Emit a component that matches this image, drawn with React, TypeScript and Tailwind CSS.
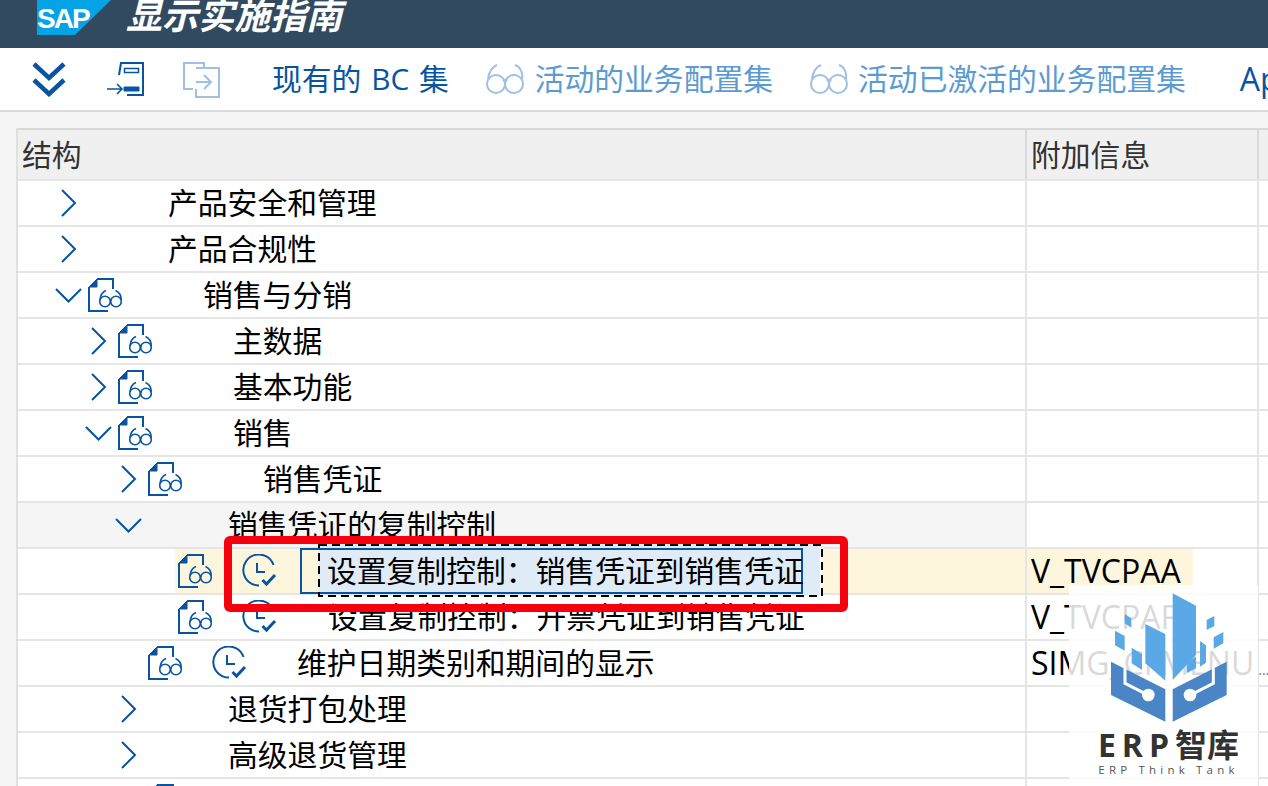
import type { ReactNode } from "react";

type TreeRow = {
  indent: string;
  chevron?: "right" | "down";
  doc?: boolean;
  clock?: boolean;
  gap: string;
  text?: string;
  info?: ReactNode;
  rowClass?: string;
  focused?: boolean;
};

const rows: TreeRow[] = [
  { indent: "pl-[37px]", chevron: "right", gap: "w-[80px]", text: "产品安全和管理" },
  { indent: "pl-[37px]", chevron: "right", gap: "w-[80px]", text: "产品合规性" },
  { indent: "pl-[37px]", chevron: "down", doc: true, gap: "w-[80px]", text: "销售与分销" },
  { indent: "pl-[67px]", chevron: "right", doc: true, gap: "w-[80px]", text: "主数据" },
  { indent: "pl-[67px]", chevron: "right", doc: true, gap: "w-[80px]", text: "基本功能" },
  { indent: "pl-[67px]", chevron: "down", doc: true, gap: "w-[80px]", text: "销售" },
  { indent: "pl-[97px]", chevron: "right", doc: true, gap: "w-[80px]", text: "销售凭证" },
  { indent: "pl-[97px]", chevron: "down", gap: "w-[80px]", text: "销售凭证的复制控制", rowClass: "bg-[#f5f5f5]" },
  { indent: "pl-[127px]", doc: true, clock: true, gap: "w-[24px]", text: "设置复制控制：销售凭证到销售凭证", info: "V_TVCPAA", focused: true },
  { indent: "pl-[127px]", doc: true, clock: true, gap: "w-[52px]", text: "设置复制控制：开票凭证到销售凭证", info: "V_TVCPAF" },
  { indent: "pl-[97px]", doc: true, clock: true, gap: "w-[51px]", text: "维护日期类别和期间的显示", info: "SIMG_CFMENU" },
  { indent: "pl-[97px]", chevron: "right", gap: "w-[80px]", text: "退货打包处理" },
  { indent: "pl-[97px]", chevron: "right", gap: "w-[80px]", text: "高级退货管理" },
  { indent: "pl-[97px]", doc: true, gap: "w-[80px]" },
];

function Chevron({ dir }: { dir: "right" | "down" }) {
  return (
    <svg width="33" height="30" viewBox="0 0 33 30" fill="none" stroke="#0854a0" strokeWidth="2" className="shrink-0">
      {dir === "right" ? <path d="M7 2l13 13L7 28" /> : <path d="M1 9l12.5 12.5L26 9" />}
    </svg>
  );
}

function GlassesDoc() {
  return (
    <svg width="35" height="34" viewBox="0 0 35 34" fill="none" stroke="#0854a0" strokeWidth="2" className="shrink-0">
      <path d="M9 1h16v10M1 9v24h19" />
      <path d="M1 9l8-8v8z" fill="#0854a0" strokeWidth="1" />
      <circle cx="17" cy="23.5" r="5.300" strokeWidth="1.600" />
      <circle cx="28" cy="23.5" r="5.300" strokeWidth="1.600" />
      <path d="M22 22.500c.8-.8 1.200-.8 1 0M12 22c.3-4 2.500-8 6-9.500M33.200 22c0-4-2.200-8-5.700-9.500" strokeWidth="1.600" />
    </svg>
  );
}

function ClockCheck() {
  return (
    <svg width="36" height="34" viewBox="0 0 36 34" fill="none" stroke="#0854a0" strokeWidth="2" className="shrink-0">
      <path d="M31.500 11A15.500 15.500 0 1 0 17 31.500" />
      <path d="M15 9v9h8" />
      <path d="M20.500 26l4 4 8.500-9" strokeWidth="3" />
    </svg>
  );
}

function Spectacles() {
  return (
    <svg width="38" height="30" viewBox="0 0 38 30" fill="none" stroke="#9dc0e3" strokeWidth="2" className="shrink-0">
      <circle cx="10" cy="20" r="9" />
      <circle cx="28" cy="20" r="9" />
      <path d="M17 17c2-2 3-2 4 0M2 15C3 8 6 3 11 1M36 15c1-5-1-12-7-14" />
    </svg>
  );
}

function Tree({ row }: { row: TreeRow }) {
  return (
    <div className={`flex h-[46px] border-b-2 border-[#e5e5e5] ${row.focused ? "relative z-10" : ""}`}>
      <div className={`relative flex w-[1007px] shrink-0 items-center ${row.indent} ${row.rowClass ?? ""}`}>
        {row.focused && <div className="absolute left-[157px] top-0 bottom-0 right-0 bg-[#fdf6dd]" />}
        <div className="relative flex items-center">
          <div className="w-[33px] shrink-0">{row.chevron && <Chevron dir={row.chevron} />}</div>
          {row.doc && (
            <div className={row.clock ? "w-[64px] shrink-0" : "w-[35px] shrink-0"}>
              <GlassesDoc />
            </div>
          )}
          {row.clock && (
            <div className="w-[34px] shrink-0">
              <ClockCheck />
            </div>
          )}
          <div className={`shrink-0 ${row.gap}`} />
          {row.focused ? (
            <div className="relative flex h-[46px] w-[503px] shrink-0 items-center">
              <div className="absolute left-[19px] top-[-3px] h-[51px] w-[503px] border-r-2 border-white bg-[#dfecf8]" />
              <div className="absolute inset-0 border-2 border-[#0854a0]" />
              <svg width="505" height="53" viewBox="0 0 505 53" fill="none" stroke="#000" strokeWidth="2" strokeDasharray="8 5" className="absolute left-[18px] top-[-4px]">
                <rect x="1" y="1" width="503" height="51" />
              </svg>
              <span className="relative ml-[27px] whitespace-nowrap text-[29.8px] text-black">{row.text}</span>
            </div>
          ) : (
            row.text && <span className="whitespace-nowrap text-[29.8px] text-black">{row.text}</span>
          )}
        </div>
      </div>
      <div className="flex w-[232px] shrink-0 items-center border-l-2 border-[#e5e5e5]">
        {row.info && (
          <span className={`flex h-full items-center whitespace-nowrap pl-[4px] pr-[12px] text-[32px] text-black ${row.focused ? "bg-[#fdf6dd] text-[#333]" : ""}`}>
            {row.info}
            {row.info === "SIMG_CFMENU" && <span className="ml-[4px] mt-[12px] text-[14px] text-[#777]">...</span>}
          </span>
        )}
      </div>
      <div className="w-[11px] shrink-0 border-l-2 border-[#e5e5e5]" />
    </div>
  );
}

function Watermark() {
  return (
    <div className="absolute left-[1069px] top-[585px] z-20 flex h-[201px] w-[189px] flex-col items-center bg-white/85">
      <svg width="188" height="146" viewBox="147 135 564 438" className="shrink-0">
        <g fill="#5aa9e6">
          <path d="M455 160l70 37v148l-70 75z" />
          <path d="M373 252l60 30v140l-60-52z" />
          <path d="M311 222l20 13v28l-20-13z" />
          <path d="M282 272l29 16v44l-29-16z" />
          <path d="M332 323l31 19v48l-31-20z" />
          <path d="M557 240l23-12v30l-23 12z" />
          <path d="M578 292l29-16v34l-29 16z" />
          <path d="M537 303l18 13v52l-18 12z" />
          <path d="M497 367l28-17v35l-28 15z" />
        </g>
        <g fill="#4a86c5">
          <path d="M270 365l163 83v97l-163-80z" />
          <path d="M617 365L455 448v97l162-80z" />
        </g>
        <g fill="none" stroke="#fff" strokeWidth="9">
          <path d="M312 385v45l65 33" />
          <path d="M577 385v45l-65 33" />
        </g>
        <circle cx="382" cy="465" r="19" fill="#fff" />
        <circle cx="507" cy="465" r="19" fill="#fff" />
      </svg>
      <div className="mt-[-4px] whitespace-nowrap pl-[10px] text-[32px] font-bold leading-[36px] text-[#333]">
        <span className="tracking-[6px]">ERP</span>智库
      </div>
      <div className="whitespace-nowrap pl-[10px] text-[11.5px] leading-[14px] tracking-[4.200px] text-[#555]">ERP Think Tank</div>
    </div>
  );
}

export default function App() {
  return (
    <div className="relative h-[786px] w-[1268px] overflow-hidden bg-[#f5f5f5] font-['Open_Sans','Noto_Sans_CJK_SC',sans-serif]">
      {/* title bar */}
      <div className="flex h-12 items-start overflow-hidden bg-[#314a60] pl-[37px]">
        <svg width="74" height="35" viewBox="0 0 74 35" className="shrink-0">
          <path d="M0 0h74L38 35H0z" fill="#04a3e6" />
          <text x="0" y="28" fontFamily="Liberation Sans" fontWeight="700" fontSize="28" fill="#fff" letterSpacing="-2">SAP</text>
        </svg>
        <span className="ml-[15px] mt-[-10px] whitespace-nowrap text-[36px] font-bold italic leading-[52px] text-white">显示实施指南</span>
      </div>

      {/* toolbar */}
      <div className="flex h-[64px] items-center overflow-hidden border-b-2 border-[#d9d9d9] bg-white pl-[32px]">
        <svg width="34" height="36" viewBox="0 0 34 36" fill="none" stroke="#0854a0" strokeWidth="4.500" className="shrink-0">
          <path d="M2 3l15 14L32 3M2 19l15 14 15-14" />
        </svg>
        <svg width="37" height="34" viewBox="0 0 37 34" fill="none" stroke="#0854a0" strokeWidth="2" className="ml-[41px] shrink-0">
          <path d="M12 13l2-12h22v32H20" />
          <path d="M17.500 6.500h14v4h-14z" strokeWidth="1.500" />
          <path d="M17 25h15v4H17z" fill="#0854a0" strokeWidth="1" />
          <path d="M0 27h15M10 22l5 5-5 5" strokeWidth="1.600" />
        </svg>
        <svg width="38" height="37" viewBox="0 0 38 37" fill="none" stroke="#9dc0e3" strokeWidth="2" className="ml-[38px] shrink-0">
          <path d="M22 7V2H2v26h9" />
          <path d="M14 7h23v29H14v-8" />
          <path d="M14 21h14M22 14l7 7-7 7" />
        </svg>
        <span className="ml-[52px] whitespace-nowrap text-[29.8px] text-[#0854a0] [word-spacing:2px]">现有的 BC 集</span>
        <div className="ml-[37px] flex shrink-0 items-center">
          <Spectacles />
          <span className="ml-[11px] whitespace-nowrap text-[29.8px] text-[#5c9bd1]">活动的业务配置集</span>
        </div>
        <div className="ml-[37px] flex shrink-0 items-center">
          <Spectacles />
          <span className="ml-[10px] whitespace-nowrap text-[29.8px] text-[#5c9bd1]">活动已激活的业务配置集</span>
        </div>
        <span className="ml-[54px] whitespace-nowrap text-[32px] text-[#0854a0]">Ap</span>
      </div>

      {/* structure table */}
      <div className="ml-4 mt-4 border-l-2 border-[#e0e0e0]">
        <div className="flex h-[53px] border-y-2 border-t-[#d9d9d9] border-b-[#e5e5e5] bg-[#f0f0f0] text-[29.8px] text-[#333]">
          <div className="flex w-[1007px] shrink-0 items-center pl-[4px] pt-[2px]">结构</div>
          <div className="flex w-[232px] shrink-0 items-center border-l-2 border-[#d9d9d9] pl-[4px] pt-[2px]">附加信息</div>
          <div className="flex-1 border-l-2 border-[#d9d9d9]" />
        </div>
        <div className="bg-white">
          {rows.map((row, i) => (
            <Tree key={i} row={row} />
          ))}
        </div>
      </div>

      {/* red annotation */}
      <div className="absolute left-[224px] top-[536px] z-20 h-[76px] w-[624px] rounded-[6px] border-[8px] border-[#f5000d]" />
      <Watermark />
    </div>
  );
}
